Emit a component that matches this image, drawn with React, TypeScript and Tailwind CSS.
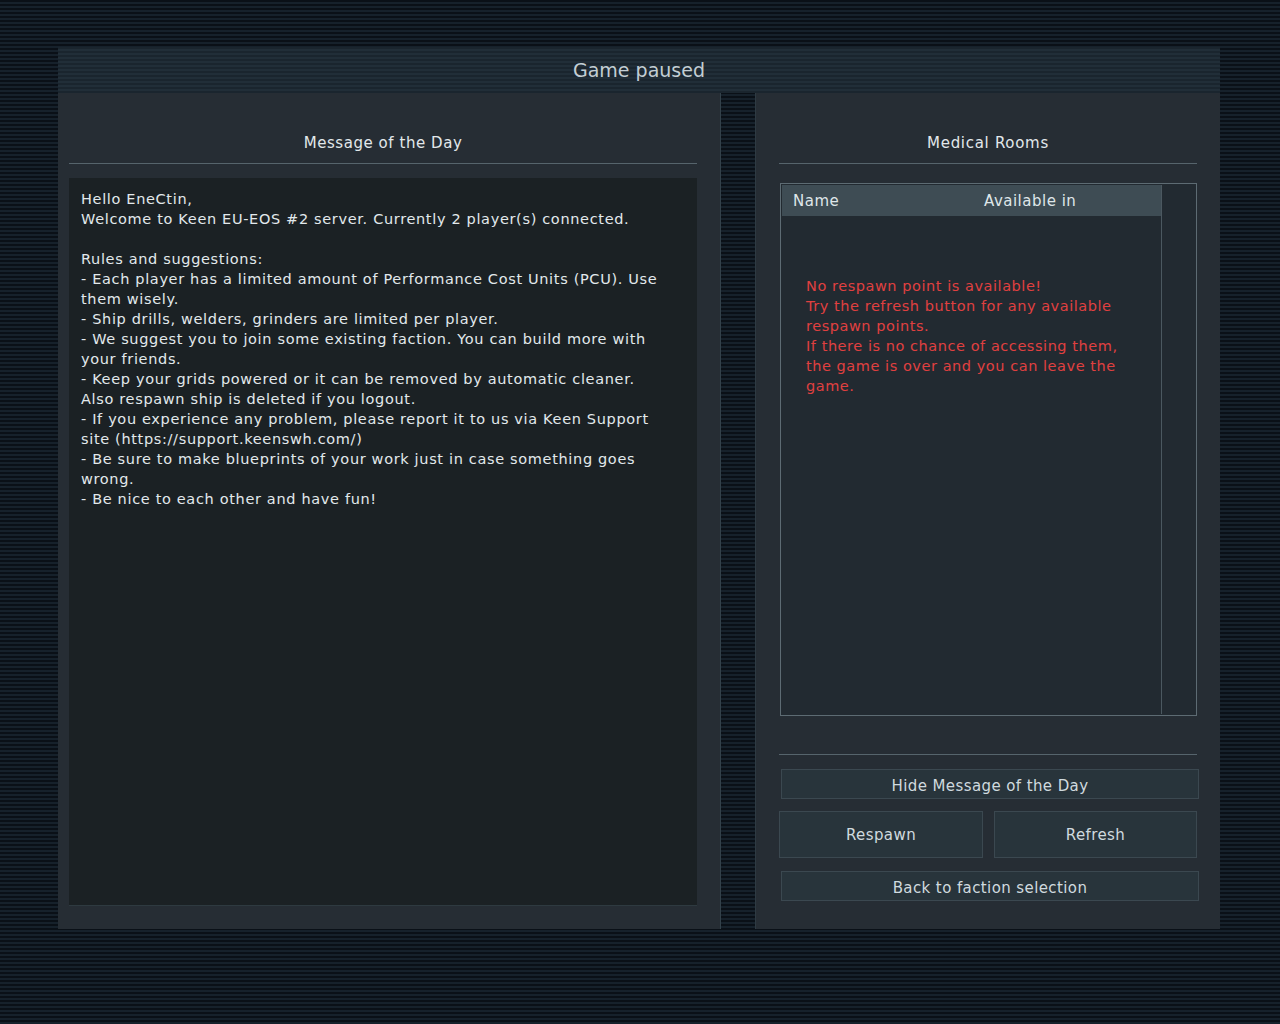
const motdLines = [
  "Hello EneCtin,",
  "Welcome to Keen EU-EOS #2 server. Currently 2 player(s) connected.",
  "",
  "Rules and suggestions:",
  "- Each player has a limited amount of Performance Cost Units (PCU). Use",
  "them wisely.",
  "- Ship drills, welders, grinders are limited per player.",
  "- We suggest you to join some existing faction. You can build more with",
  "your friends.",
  "- Keep your grids powered or it can be removed by automatic cleaner.",
  "Also respawn ship is deleted if you logout.",
  "- If you experience any problem, please report it to us via Keen Support",
  "site (https://support.keenswh.com/)",
  "- Be sure to make blueprints of your work just in case something goes",
  "wrong.",
  "- Be nice to each other and have fun!",
];

const errorLines = [
  "No respawn point is available!",
  "Try the refresh button for any available",
  "respawn points.",
  "If there is no chance of accessing them,",
  "the game is over and you can leave the",
  "game.",
];

function GameButton({ label, className }: { label: string; className: string }) {
  return (
    <button
      className={`flex items-center justify-center border border-[#3b4850] bg-[#28343b] text-[15px] tracking-[0.4px] text-[#d0dadf] ${className}`}
    >
      {label}
    </button>
  );
}

export default function App() {
  return (
    <div
      className="h-[1024px] w-full bg-[#0c131b] bg-[repeating-linear-gradient(180deg,#0a1017_0px,#0a1017_2px,#16212b_2px,#16212b_4px)] pt-[47px] pl-[58px] font-['DejaVu_Sans',sans-serif]"
    >
      <div className="w-[1162px]">
        {/* header */}
        <div className="flex h-[46px] items-center justify-center bg-[repeating-linear-gradient(180deg,#1a252e_0px,#1a252e_2px,#212e38_2px,#212e38_4px)] text-[19px] text-[#c3ced4]">
          Game paused
        </div>

        <div className="flex h-[836px] justify-between">
          {/* left panel */}
          <div className="flex w-[663px] flex-col border-r border-[#33414a] bg-[#262d34] pl-[11px] pr-[23px]">
            <div className="mt-[40px] h-[20px] text-center text-[15px] leading-[20px] tracking-[0.55px] text-[#e2e8eb]">
              Message of the Day
            </div>
            <div className="mt-[10px] h-px bg-[#56646c]" />
            <div className="mt-[14px] h-[728px] w-[628px] border-b border-[#2e3a40] bg-[#1b2124] px-[12px] pt-[11px] text-[14.5px] leading-[20px] tracking-[0.66px] text-[#e2e9ec]">
              {motdLines.map((line, i) => (
                <div key={i} className="h-[20px] whitespace-nowrap">
                  {line}
                </div>
              ))}
            </div>
          </div>

          {/* right panel */}
          <div className="flex w-[465px] flex-col border-l border-[#2e3a42] bg-[#262d34] pl-[23px] pr-[23px]">
            <div className="mt-[40px] h-[20px] text-center text-[15px] leading-[20px] tracking-[0.7px] text-[#e2e8eb]">
              Medical Rooms
            </div>
            <div className="mt-[10px] h-px bg-[#56646c]" />

            <div className="ml-[1px] mt-[19px] flex h-[533px] border border-[#5d6b73] bg-[#222a31] p-px">
              <div className="flex flex-1 flex-col">
                <div className="flex h-[31px] items-center pt-[2px] bg-[#3e4c54] text-[15px] tracking-[0.5px] text-[#dfe6e9]">
                  <span className="w-[202px] pl-[11px]">Name</span>
                  <span>Available in</span>
                </div>
                <div className="mt-[60px] pl-[24px] text-[14.5px] leading-[20px] tracking-[0.55px] text-[#e04040]">
                  {errorLines.map((line, i) => (
                    <div key={i} className="h-[20px] whitespace-nowrap">
                      {line}
                    </div>
                  ))}
                </div>
              </div>
              <div className="w-[34px] border-l border-[#4b5860]" />
            </div>

            <div className="mt-[38px] h-px bg-[#56646c]" />

            <GameButton label="Hide Message of the Day" className="ml-[2px] mr-[-2px] mt-[14px] h-[30px] pt-[4px]" />
            <div className="mt-[12px] flex justify-between">
              <GameButton label="Respawn" className="h-[47px] w-[204px] pt-[2px]" />
              <GameButton label="Refresh" className="h-[47px] w-[203px] pt-[2px]" />
            </div>
            <GameButton label="Back to faction selection" className="ml-[2px] mr-[-2px] mt-[13px] h-[30px] pt-[4px]" />
          </div>
        </div>
      </div>
    </div>
  );
}
